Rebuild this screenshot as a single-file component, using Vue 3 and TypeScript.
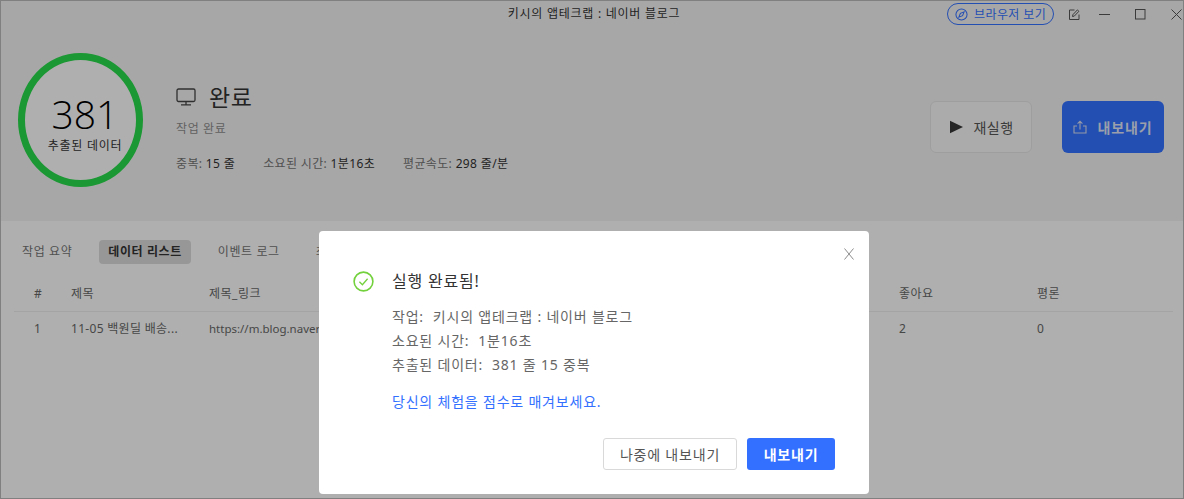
<script setup lang="ts">
const columns = [
  { name: '#', cell: '1', cls: 'c-num' },
  { name: '제목', cell: '11-05 백원딜 배송...', cls: 'c-title' },
  { name: '제목_링크', cell: 'https://m.blog.naver.', cls: 'c-link' },
  { name: '', cell: '', cls: 'c-gap' },
  { name: '좋아요', cell: '2', cls: 'c-like' },
  { name: '평론', cell: '0', cls: 'c-reply' },
]
const tabs = ['작업 요약', '데이터 리스트', '이벤트 로그', '최적화']
const stats = [
  { k: '중복:', v: '15 줄' },
  { k: '소요된 시간:', v: '1분16초' },
  { k: '평균속도:', v: '298 줄/분' },
]
const details = [
  { k: '작업:', v: '키시의 앱테크랩 : 네이버 블로그' },
  { k: '소요된 시간:', v: '1분16초' },
  { k: '추출된 데이터:', v: '381 줄 15 중복' },
]
</script>

<template>
  <div class="win">
    <section class="top">
      <header class="bar">
        <div class="bar-title">키시의 앱테크랩 : 네이버 블로그</div>
        <div class="bar-actions">
          <button class="browser">
            <svg width="13" height="13" viewBox="0 0 14 14" fill="none" stroke="currentColor" stroke-width="1.1">
              <circle cx="7" cy="7" r="6" />
              <path d="M9.8 4.2 8.2 8.2 4.2 9.8 5.8 5.8Z" />
            </svg>
            <span>브라우저 보기</span>
          </button>
          <svg class="ic-edit" width="11" height="11" viewBox="0 0 11 11" fill="none" stroke="#555" stroke-width="1">
            <path d="M5.5 1H.5v9.5H10V5.5" />
            <path d="M3.5 7.5l.4-1.8L8.4.9l1.5 1.4-4.6 4.8z" />
          </svg>
          <svg class="ic-win" width="11" height="11" viewBox="0 0 11 11" fill="none" stroke="#555" stroke-width="1">
            <path d="M0 5.5h11" />
          </svg>
          <svg class="ic-win" width="11" height="11" viewBox="0 0 11 11" fill="none" stroke="#555" stroke-width="1">
            <rect x=".5" y=".5" width="9.5" height="9.5" />
          </svg>
          <svg class="ic-win" width="11" height="11" viewBox="0 0 11 11" fill="none" stroke="#555" stroke-width="1">
            <path d="M.5.5l10 10M10.5.5l-10 10" />
          </svg>
        </div>
      </header>
      <div class="hero">
        <div class="ring">
          <div class="ring-num">381</div>
          <div class="ring-label">추출된 데이터</div>
        </div>
        <div class="info">
          <div class="status">
            <svg width="20" height="18" viewBox="0 0 20 18" fill="none" stroke="#444" stroke-width="1.3">
              <rect x="1" y="1" width="18" height="12.5" rx="1.5" />
              <path d="M10 13.5v3M5 16.8h10" />
            </svg>
            <span>완료</span>
          </div>
          <div class="sub">작업 완료</div>
          <div class="stats">
            <span v-for="s in stats" :key="s.k" class="stat"><i>{{ s.k }}</i> {{ s.v }}</span>
          </div>
        </div>
        <div class="hero-actions">
          <button class="btn-ghost">
            <svg width="14" height="14" viewBox="0 0 14 14"><path d="M1 .8 14 7 1 13.2Z" fill="#363636" /></svg>
            <span>재실행</span>
          </button>
          <button class="btn-export">
            <svg width="14" height="14" viewBox="0 0 14 14" fill="none" stroke="#d5dcf0" stroke-width="1.1">
              <path d="M4 6H1v7h12V6h-3M7 9.5V1.2M4.6 3.6 7 1.2l2.4 2.4" />
            </svg>
            <span>내보내기</span>
          </button>
        </div>
      </div>
    </section>

    <section class="body">
      <nav class="tabs">
        <span v-for="(t, i) in tabs" :key="t" class="tab" :class="{ on: i === 1 }">{{ t }}</span>
      </nav>
      <div class="table">
        <div class="row head">
          <span v-for="c in columns" :key="c.cls" :class="c.cls">{{ c.name }}</span>
        </div>
        <div class="row">
          <span v-for="c in columns" :key="c.cls" :class="c.cls">{{ c.cell }}</span>
        </div>
      </div>
    </section>

    <div class="scrim">
      <div class="dialog">
        <svg class="close" width="10" height="12" viewBox="0 0 10 12" fill="none" stroke="#8c8c8c" stroke-width="1">
          <path d="M.5.5l9 11M9.5.5l-9 11" />
        </svg>
        <div class="d-head">
          <svg width="21" height="21" viewBox="0 0 21 21" fill="none" stroke="#73d13d">
            <circle cx="10.5" cy="10.5" r="9.4" stroke-width="1.6" />
            <path d="M6.4 10.8l3 3 5.2-6" stroke-width="1.3" />
          </svg>
          <span>실행 완료됨!</span>
        </div>
        <div class="d-body">
          <div v-for="d in details" :key="d.k" class="d-line">{{ d.k }}&nbsp;&nbsp;{{ d.v }}</div>
          <div class="d-link">당신의 체험을 점수로 매겨보세요.</div>
        </div>
        <div class="d-foot">
          <button class="d-later">나중에 내보내기</button>
          <button class="d-export">내보내기</button>
        </div>
      </div>
    </div>
    <div class="frame"></div>
  </div>
</template>

<style scoped>
.win {
  position: relative;
  width: 1184px;
  height: 499px;
  overflow: hidden;
  background: #fbfbfb;
  font-family: "Noto Sans", "Noto Sans CJK KR", sans-serif;
  color: #333;
  box-sizing: border-box;
}
button { font-family: inherit; cursor: pointer; }

.top { height: 221px; background: #f0f0f0; box-sizing: border-box; }
.bar { position: relative; height: 28px; display: flex; align-items: center; justify-content: flex-end; }
.bar-title { position: absolute; left: 4px; right: 0; top: 5px; text-align: center; font-size: 12px; letter-spacing: .75px; line-height: 18px; color: #333; }
.bar-actions { position: relative; display: flex; align-items: center; margin-right: 2px; }
.browser {
  display: flex; align-items: center; gap: 6px;
  height: 22px; width: 107px; padding: 0 0 0 7px; margin-right: 15px;
  border: 1px solid #3370ff; border-radius: 11px; background: transparent;
  color: #3370ff; font-size: 12px; letter-spacing: .4px; white-space: nowrap; box-sizing: border-box;
}
.ic-edit { margin-right: 19px; }
.ic-win { margin-right: 25px; }
.ic-win:last-child { margin-right: 0; }

.hero { display: flex; align-items: flex-start; padding: 25px 20px 0 18px; }
.ring {
  width: 125px; height: 134px; box-sizing: border-box;
  border: 7px solid #28d94a; border-radius: 50%;
  background: #fbfbfb;
  display: flex; flex-direction: column; align-items: center;
  padding: 30px 0 0 9px;
}
.ring-num { font-size: 39px; font-weight: 300; line-height: 47px; color: #000; font-family: "Open Sans", "Noto Sans CJK KR", sans-serif; }
.ring-label { font-size: 12px; letter-spacing: .75px; line-height: 16px; margin-top: 1px; color: #333; }
.info { margin-left: 33px; padding-top: 29px; flex: 1; }
.status { display: flex; align-items: center; gap: 13px; font-size: 23px; letter-spacing: .5px; line-height: 30px; color: #333; }
.sub { font-size: 12px; letter-spacing: .6px; line-height: 18px; margin-top: 8px; color: #8c8c8c; }
.stats { display: flex; gap: 28px; margin-top: 17px; font-size: 12px; letter-spacing: .35px; line-height: 18px; color: #333; }
.stat i { font-style: normal; color: #737373; }
.hero-actions { display: flex; gap: 30px; padding-top: 48px; }
.btn-ghost, .btn-export {
  height: 52px; border-radius: 6px; display: flex; align-items: center; justify-content: center;
  box-sizing: border-box; font-size: 14px;
}
.btn-ghost { width: 102px; gap: 11px; background: #f5f5f5; border: 1px solid #e3e3e3; color: #555; letter-spacing: .4px; }
.btn-export { width: 102px; gap: 10px; background: #3370ff; border: 0; color: #dde4f5; font-weight: 700; letter-spacing: .9px; }

.body { padding: 0 0 0 14px; }
.tabs { display: flex; align-items: center; gap: 18px; padding: 19px 0 0 0; height: 24px; margin-left: -1px; }
.tab { font-size: 12px; letter-spacing: .6px; line-height: 24px; padding: 0 9px; border-radius: 4px; color: #737373; white-space: nowrap; }
.tab.on { background: #d9d9d9; color: #333; font-weight: 700; }
.table { margin-top: 12px; margin-right: 11px; }
.row { display: flex; font-size: 12px; letter-spacing: .3px; line-height: 18px; color: #666; height: 34px; align-items: center; }
.row.head { border-bottom: 1px solid #ebebeb; height: 35px; font-size: 12px; letter-spacing: .5px; }
.row span { display: block; white-space: nowrap; }
.row:not(.head) .c-link { font-size: 11.5px; letter-spacing: 0; }
.c-num { width: 57px; padding-left: 20px; box-sizing: border-box; }
.c-title { width: 138px; }
.c-link { width: 110px; }
.c-gap { width: 580px; }
.c-like { width: 138px; }
.c-reply { width: 100px; }

.scrim {
  position: absolute; inset: 0; background: rgba(0, 0, 0, .3);
}
.dialog {
  position: absolute; left: 319px; top: 231px;
  width: 550px; height: 263px; background: #fff; border-radius: 4px;
  padding: 39px 34px 0 34px; box-sizing: border-box;
  display: flex; flex-direction: column;
}
.close { position: absolute; top: 17px; right: 15px; }
.d-head { display: flex; align-items: center; gap: 18px; font-size: 16px; letter-spacing: .8px; line-height: 22px; color: #333; }
.d-body { margin: 13px 0 0 39px; font-size: 14px; letter-spacing: .8px; color: #666; }
.d-line { line-height: 24px; white-space: nowrap; }
.d-link { margin-top: 13px; line-height: 24px; color: #3370ff; }
.d-foot { display: flex; justify-content: flex-end; gap: 10px; margin-top: 24px; }
.d-later, .d-export { height: 32px; border-radius: 3px; font-size: 14px; letter-spacing: .8px; box-sizing: border-box; }
.d-later { width: 134px; background: #fff; border: 1px solid #d9d9d9; color: #555; }
.d-export { width: 88px; background: #3370ff; border: 0; color: #fff; font-weight: 700; }
.frame { position: absolute; inset: 0; border: 1px solid #808080; pointer-events: none; box-sizing: border-box; }
</style>
